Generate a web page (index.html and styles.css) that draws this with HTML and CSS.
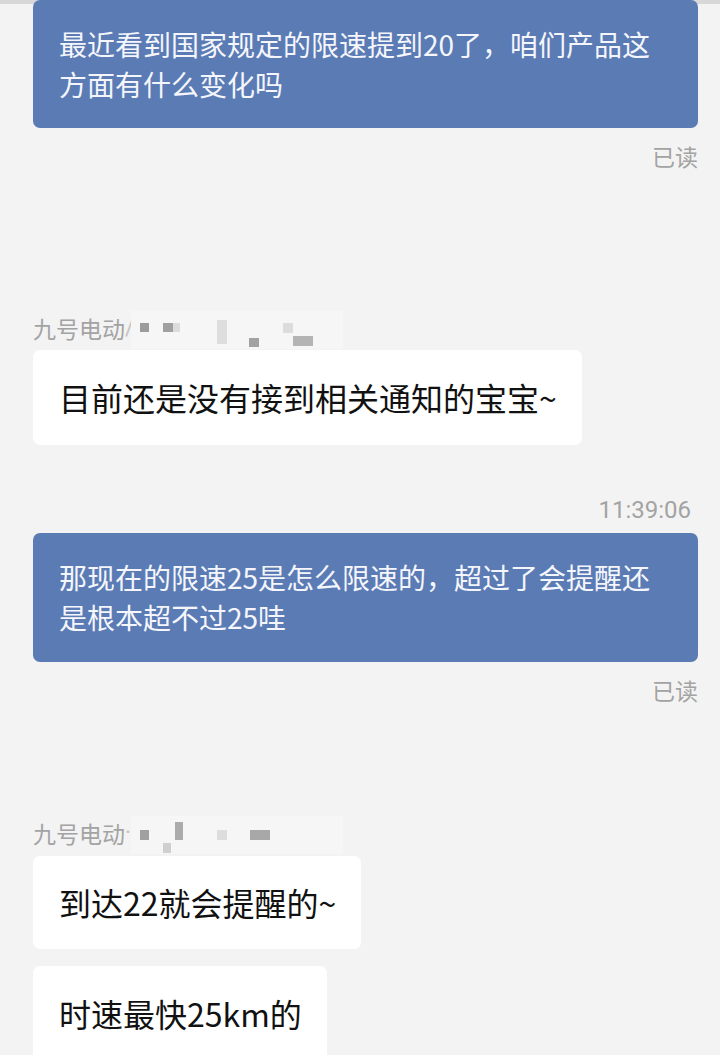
FILE: index.html
```html
<!DOCTYPE html>
<html lang="zh-CN">
<head>
    <meta charset="UTF-8">
    <meta name="viewport" content="width=device-width, initial-scale=1.0">
    <title>聊天记录</title>
    <link rel="stylesheet" href="styles.css">
</head>
<body>
    <div class="chat">
        <div class="bubble bubble-mine">最近看到国家规定的限速提到20了，咱们产品这方面有什么变化吗</div>
        <div class="status">已读</div>

        <div class="sender sender-first">九号电动<span class="dot">/</span>
            <!-- censored name -->
            <svg class="mosaic" width="210" height="30" viewBox="0 0 210 30">
                <rect x="-2" y="-2" width="212" height="38" fill="#f6f6f6"/>
                <rect x="7" y="10" width="9" height="9" fill="#9c9c9c"/>
                <rect x="30" y="10" width="10" height="9" fill="#a0a0a0"/>
                <rect x="40" y="10" width="7" height="9" fill="#dcdcdc"/>
                <rect x="84" y="7" width="10" height="24" fill="#dedede"/>
                <rect x="116" y="25" width="10" height="9" fill="#a2a2a2"/>
                <rect x="150" y="10" width="10" height="10" fill="#dcdcdc"/>
                <rect x="160" y="23" width="20" height="10" fill="#b4b4b4"/>
            </svg>
        </div>
        <div class="bubble bubble-theirs">目前还是没有接到相关通知的宝宝~</div>

        <div class="time">11:39:06</div>
        <div class="bubble bubble-mine bubble-second">那现在的限速25是怎么限速的，超过了会提醒还是根本超不过25哇</div>
        <div class="status">已读</div>

        <div class="sender sender-second">九号电动<span class="dot">·</span>
            <svg class="mosaic" width="210" height="30" viewBox="0 0 210 30">
                <rect x="-2" y="-2" width="212" height="38" fill="#f6f6f6"/>
                <rect x="7" y="12" width="9" height="10" fill="#a0a0a0"/>
                <rect x="30" y="25" width="8" height="10" fill="#cfcfcf"/>
                <rect x="42" y="4" width="8" height="18" fill="#ababab"/>
                <rect x="84" y="12" width="10" height="10" fill="#dddddd"/>
                <rect x="117" y="12" width="20" height="10" fill="#a8a8a8"/>
            </svg>
        </div>
        <div class="bubble bubble-theirs bubble-short">到达22就会提醒的~</div>
        <div class="bubble bubble-theirs bubble-next">时速最快25km的</div>
    </div>
</body>
</html>
```

FILE: styles.css
```css
/* Basic Reset */
* {
    margin: 0;
    padding: 0;
    box-sizing: border-box;
}

body {
    font-family: 'Noto Sans CJK SC', 'Noto Sans', sans-serif;
    background: linear-gradient(#d8d8d8 0, #d8d8d8 4px, #f3f3f3 4px);
    background-color: #f3f3f3;
    height: 1055px;
    overflow: hidden;
}

.chat {
    display: flex;
    flex-direction: column;
    align-items: flex-start;
    padding: 0 22px 0 33px;
}

.bubble {
    border-radius: 7px;
}

/* my messages, blue, full width */
.bubble-mine {
    align-self: stretch;
    background-color: #5b7bb5;
    color: #f4f6fb;
    font-size: 28px;
    line-height: 40px;
    padding: 24px 26px;
    min-height: 128px;
}

.bubble-second {
    margin-top: 8px;
    min-height: 129px;
}

/* replies, white */
.bubble-theirs {
    background-color: #ffffff;
    color: #111111;
    font-size: 32px;
    line-height: 35px;
    padding: 30px 25px 30px 26px;
    margin-top: 7px;
}

.bubble-short {
    margin-top: 8px;
    padding-top: 29px;
    padding-bottom: 29px;
}

.bubble-next {
    margin-top: 17px;
}

.status,
.time,
.sender {
    font-size: 23px;
    line-height: 30px;
    color: #a3a3a3;
}

.status {
    align-self: flex-end;
    margin-top: 13px;
}

.time {
    align-self: flex-end;
    margin-top: 50px;
    margin-right: 7px;
    font-family: 'Roboto', sans-serif;
    font-size: 24px;
}

.sender {
    display: flex;
    align-items: flex-start;
}

.sender .dot {
    font-family: 'Roboto', sans-serif;
    color: #c4c4c4;
    width: 8px;
}

.sender-first {
    margin-top: 142px;
}

.sender-second {
    margin-top: 113px;
}

.mosaic {
    overflow: visible;
}
```
